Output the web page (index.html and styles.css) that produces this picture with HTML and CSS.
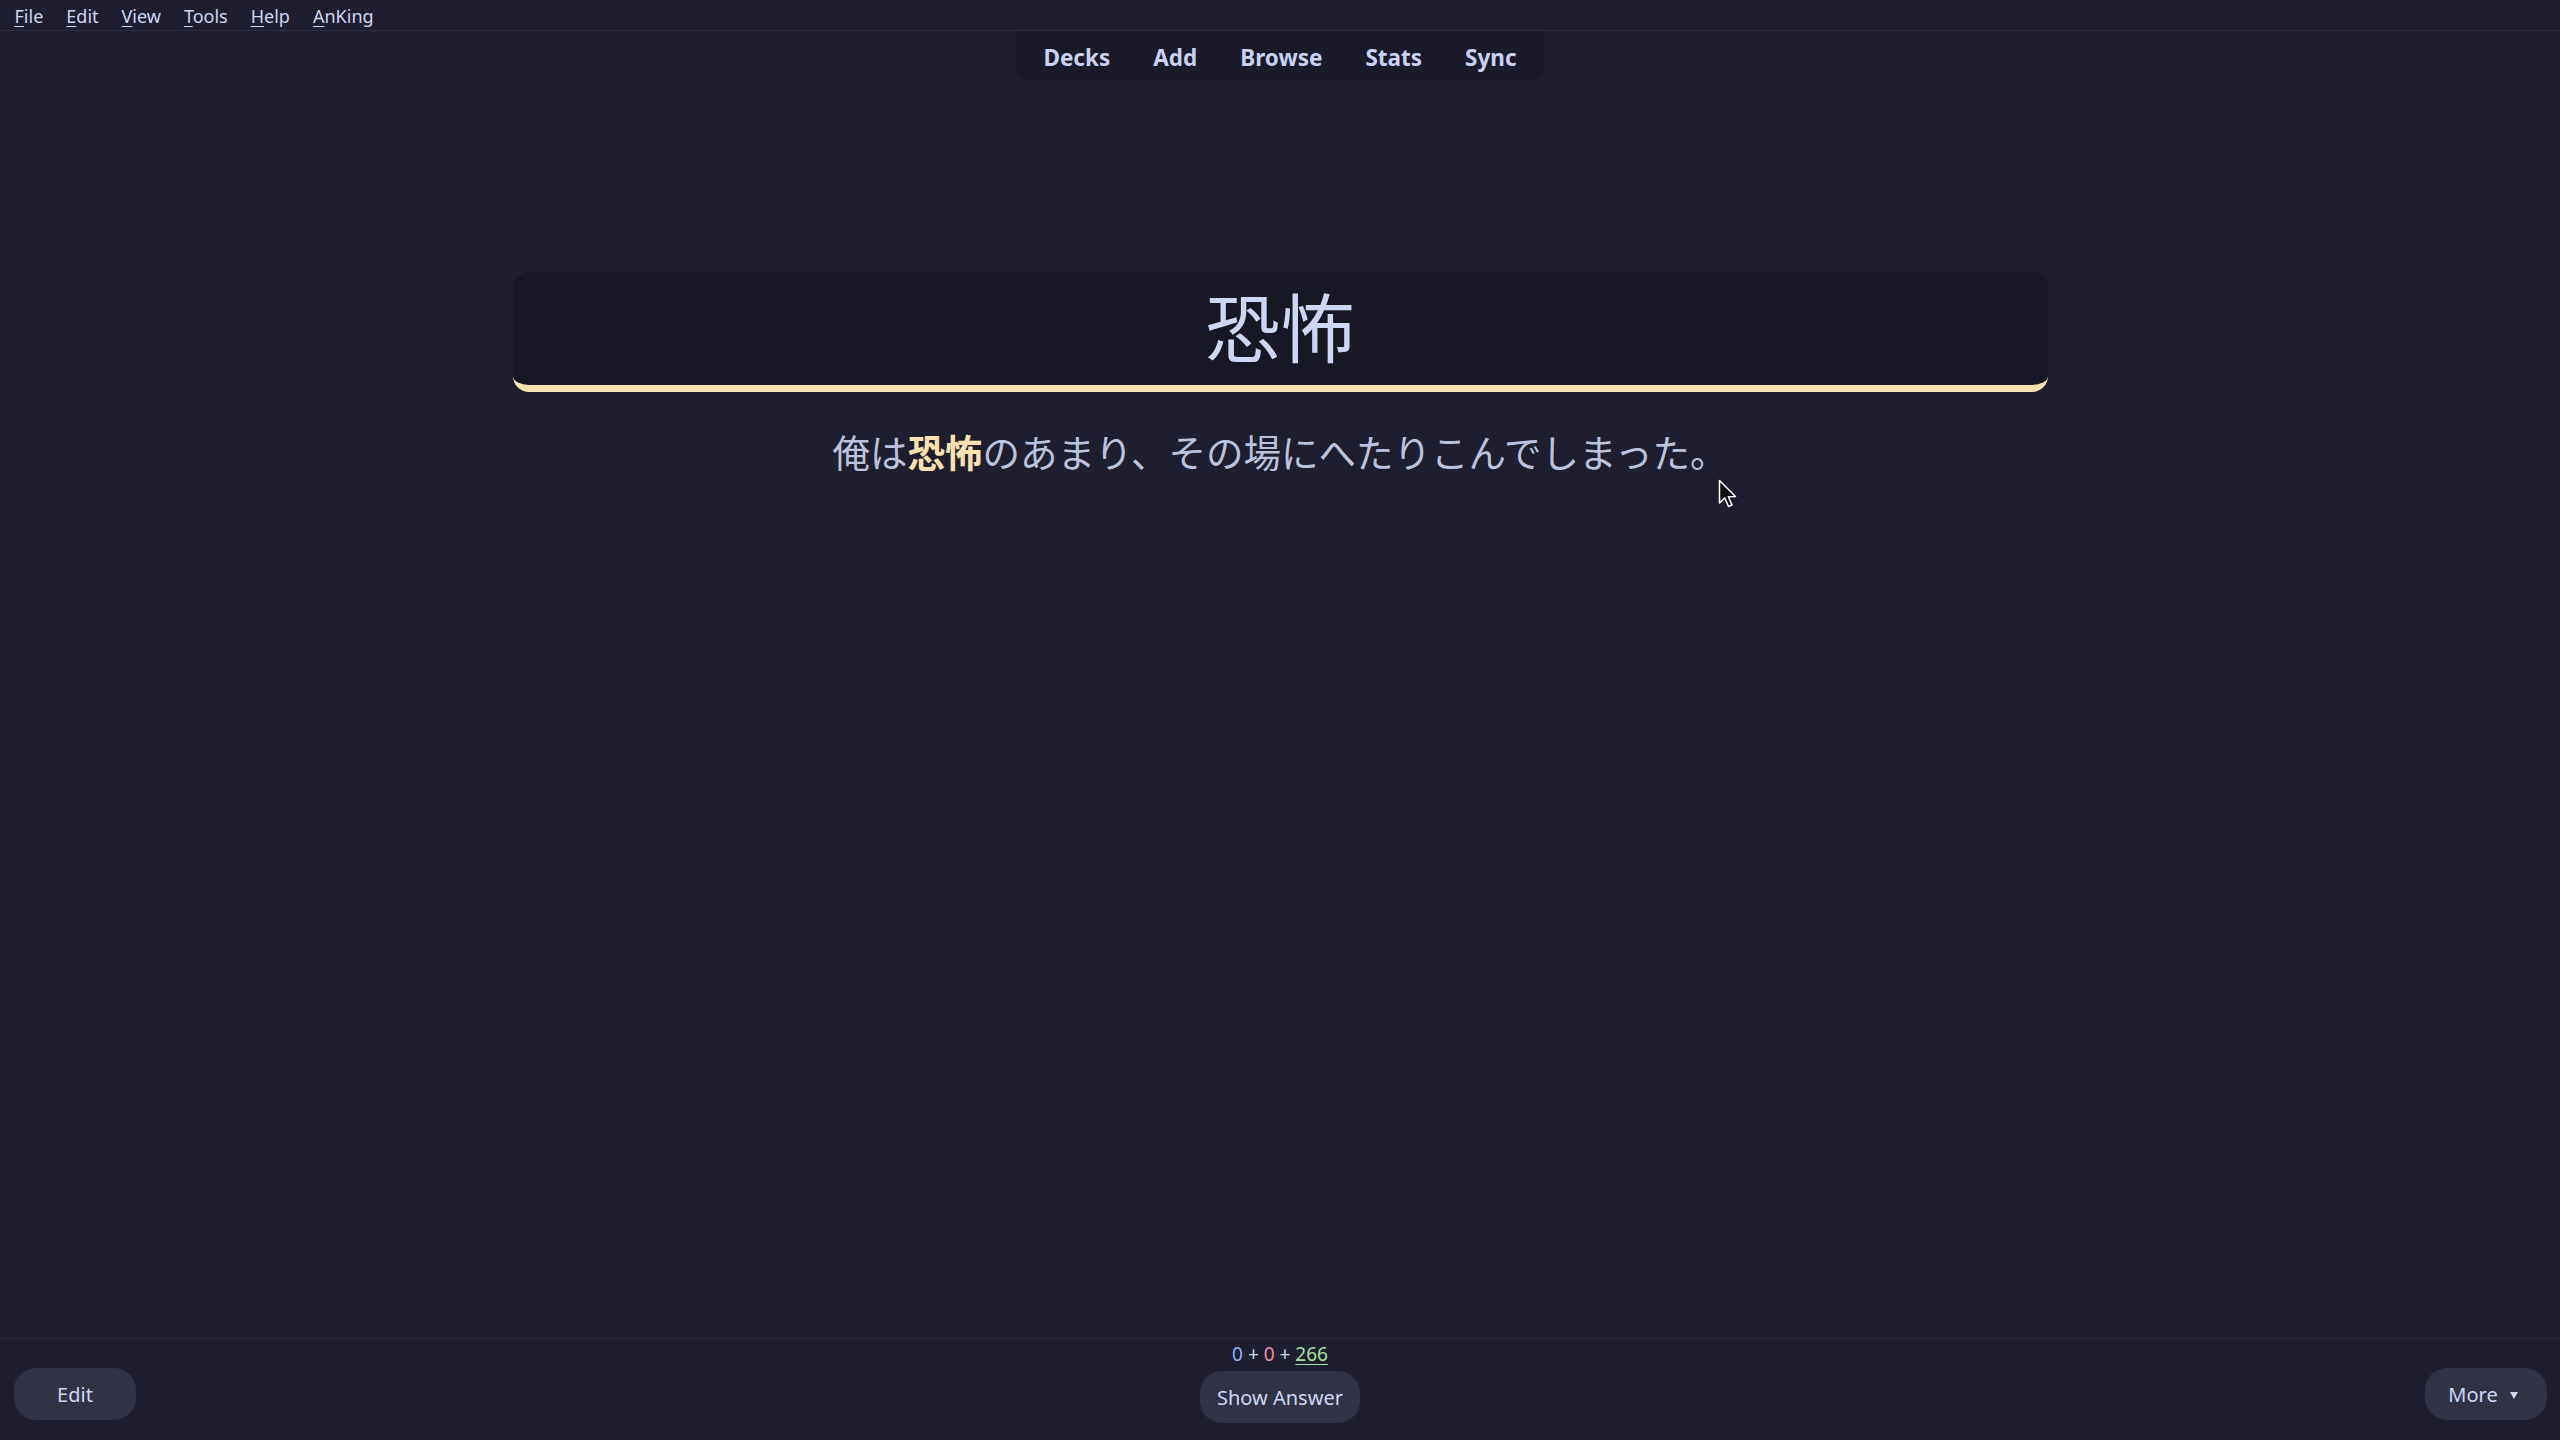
FILE: index.html
```html
<!DOCTYPE html>
<html lang="ja">
<head>
<meta charset="utf-8">
<title>Anki</title>
<link rel="stylesheet" href="styles.css">
</head>
<body>
<div class="app">
  <nav class="menubar">
    <span class="menu-item"><u>F</u>ile</span>
    <span class="menu-item"><u>E</u>dit</span>
    <span class="menu-item"><u>V</u>iew</span>
    <span class="menu-item"><u>T</u>ools</span>
    <span class="menu-item"><u>H</u>elp</span>
    <span class="menu-item"><u>A</u>nKing</span>
  </nav>
  <header class="toolbar">
    <div class="toolbar-inner">
      <span class="tb-item">Decks</span>
      <span class="tb-item">Add</span>
      <span class="tb-item">Browse</span>
      <span class="tb-item">Stats</span>
      <span class="tb-item">Sync</span>
    </div>
  </header>
  <main class="reviewer">
    <div class="card">
      <div class="word">恐怖</div>
    </div>
    <div class="sentence">俺は<b class="hl">恐怖</b>のあまり、その場にへたりこんでしまった。</div>
    <svg class="cursor" width="20" height="30" viewBox="0 0 20 30"><path d="M1.5 1.5 L1.5 24 L6.8 19 L10.5 27.5 L14 26 L10.3 17.8 L17.5 17.5 Z" fill="#111" stroke="#fff" stroke-width="1.5" stroke-linejoin="round"/></svg>
  </main>
  <footer class="bottombar">
    <div class="bb-left"><button class="btn">Edit</button></div>
    <div class="bb-middle">
      <div class="counts"><span class="c-new">0</span> + <span class="c-lrn">0</span> + <u class="c-rev">266</u></div>
      <button class="btn btn-answer">Show Answer</button>
    </div>
    <div class="bb-right"><button class="btn btn-more">More<span class="arrow"></span></button></div>
  </footer>
</div>
</body>
</html>
```

FILE: styles.css
```css
html, body {
  margin: 0;
  padding: 0;
  background: #1e1e2e;
}
body {
  font-family: "Noto Sans", "Noto Sans CJK JP", sans-serif;
  color: #cdd6f4;
}
.app {
  width: 2560px;
  height: 1440px;
  display: flex;
  flex-direction: column;
}
.menubar {
  height: 31px;
  box-sizing: border-box;
  border-bottom: 1px solid #2e2e40;
  display: flex;
  align-items: center;
  padding-left: 3px;
  padding-top: 1px;
  font-size: 18px;
  color: #cdd6f4;
}
.menu-item {
  padding: 0 11.5px;
  line-height: 28px;
}
.menu-item u {
  text-underline-offset: 3px;
}
.toolbar {
  display: flex;
  justify-content: center;
  height: 49px;
}
.toolbar-inner {
  display: flex;
  align-items: center;
  padding: 3px 7px 0;
  background: #1a1a28;
  border-radius: 0 0 12px 12px;
  height: 49px;
  box-sizing: border-box;
}
.tb-item {
  padding: 0 21.5px;
  font-weight: 700;
  font-size: 22.5px;
  color: #c9d2f4;
}
.reviewer {
  flex: 1;
  position: relative;
  padding-top: 192px;
  font-family: "Noto Sans CJK JP", sans-serif;
}
.card {
  width: 1535px;
  margin: 0 auto;
  background: #181825;
  border-radius: 16px;
  border-bottom: 7px solid #f9e2af;
  height: 105px;
  padding-bottom: 8px;
  display: flex;
  align-items: center;
  justify-content: center;
}
.word {
  font-size: 75px;
  line-height: 1;
  color: #cdd6f4;
}
.sentence {
  margin-top: 34px;
  text-align: center;
  font-size: 37.5px;
  line-height: 50px;
  color: #bac2de;
}
.hl {
  color: #f9e2af;
  font-weight: 700;
}
.cursor {
  position: absolute;
  left: 1718px;
  top: 399px;
}
.bottombar {
  height: 102px;
  box-sizing: border-box;
  border-top: 1px solid #2e2e40;
  display: grid;
  grid-template-columns: 1fr auto 1fr;
  align-items: start;
}
.bb-left {
  padding: 29px 0 0 14px;
}
.bb-right {
  padding: 29px 13px 0 0;
  display: flex;
  justify-content: flex-end;
}
.bb-middle {
  display: flex;
  flex-direction: column;
  align-items: center;
  padding-top: 4px;
}
.counts {
  font-size: 19px;
  line-height: 22px;
  color: #cdd6f4;
}
.c-new { color: #89b4fa; }
.c-lrn { color: #f38ba8; }
.c-rev { color: #a6e3a1; text-underline-offset: 3px; }
.btn {
  font-family: "Noto Sans", sans-serif;
  font-size: 20px;
  color: #cdd6f4;
  background: #313244;
  border: none;
  border-radius: 22px;
  height: 52px;
  width: 122px;
  padding: 0;
}
.btn-answer {
  margin-top: 6px;
  width: 160px;
}
.btn-more {
  display: flex;
  align-items: center;
  justify-content: center;
  padding-right: 6px;
}
.btn-more .arrow {
  width: 0;
  height: 0;
  margin-left: 12px;
  margin-top: 2px;
  border-left: 4px solid transparent;
  border-right: 4px solid transparent;
  border-top: 7px solid #cdd6f4;
}
```
